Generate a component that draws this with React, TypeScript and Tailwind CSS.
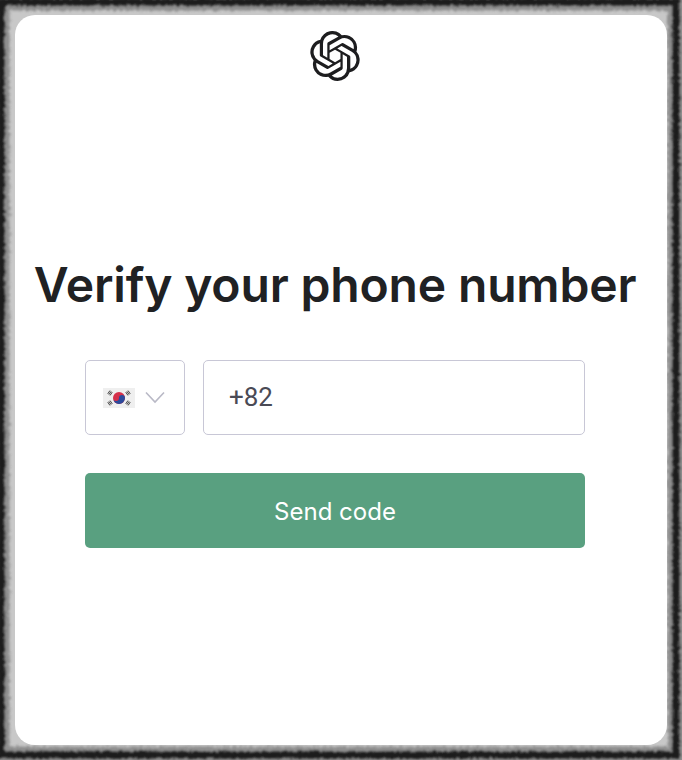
import React from "react";
import { SiOpenai } from "react-icons/si";

function Flag() {
  const bars = (x: number, y: number, r: number) => (
    <g transform={`translate(${x} ${y}) rotate(${r})`} stroke="#444" strokeWidth="0.9">
      <path d="M-2 -1.4H2M-2 0H2M-2 1.4H2" />
    </g>
  );
  return (
    <svg width="32" height="20" viewBox="0 0 32 20" className="block">
      <rect width="32" height="20" fill="#efefef" />
      <circle cx="16" cy="10" r="6" fill="#d5304a" />
      <path d="M10 10a3 3 0 0 0 6 0a3 3 0 0 1 6 0a6 6 0 0 1 -12 0z" fill="#2b4a9c" />
      {bars(7, 5, -56)}
      {bars(25, 5, 56)}
      {bars(7, 15, 56)}
      {bars(25, 15, -56)}
    </svg>
  );
}

function Frame() {
  return (
    <svg width="682" height="760" className="absolute inset-0 pointer-events-none">
      <defs>
        <filter id="rough" x="-5%" y="-5%" width="110%" height="110%">
          <feTurbulence type="fractalNoise" baseFrequency="0.3" numOctaves="3" seed="4" result="n" />
          <feDisplacementMap in="SourceGraphic" in2="n" scale="5" />
          <feGaussianBlur stdDeviation="1" />
        </filter>
      </defs>
      <g filter="url(#rough)" fill="none">
        <rect x="1" y="2" width="675" height="753" stroke="#555" strokeWidth="17" opacity="0.5" />
        <rect x="1" y="2" width="675" height="753" stroke="#1a1a1a" strokeWidth="7" />
      </g>
    </svg>
  );
}

export default function App() {
  return (
    <div className="relative w-[682px] h-[760px] bg-[#c8c8c8] p-[15px] font-['Inter','Liberation_Sans',sans-serif]">
      <Frame />
      <div className="relative w-[652px] h-[730px] bg-white rounded-[20px] flex flex-col items-center pt-[16px] pr-[12px]">
        <SiOpenai className="w-[50px] h-[50px] text-[#1d1d1f]" />
        <h1 className="mt-[175px] h-[58px] text-[48px] leading-[58px] font-semibold text-[#202123] whitespace-nowrap tracking-[-0.16px]">
          Verify your phone number
        </h1>
        <div className="mt-[46px] w-[500px] flex flex-col gap-[38px]">
          <div className="flex gap-[18px] h-[75px]">
            <div className="w-[100px] rounded-[5px] border-[1.5px] border-[#c8c7d6] flex items-center pl-[17px] gap-[9px]">
              <Flag />
              <svg width="22" height="13" viewBox="0 0 22 13" fill="none" stroke="#b9b9c6" strokeWidth="1.6">
                <path d="M2 1.5l9 9.5 9-9.5" />
              </svg>
            </div>
            <div className="flex-1 rounded-[5px] border-[1.5px] border-[#c8c7d6] flex items-center pl-[25px] text-[26px] text-[#4a4a55] font-['Roboto',sans-serif]">
              +82
            </div>
          </div>
          <button className="h-[75px] rounded-[5px] pt-[3px] bg-[#59a080] text-white text-[24px] font-normal">
            Send code
          </button>
        </div>
      </div>
    </div>
  );
}
